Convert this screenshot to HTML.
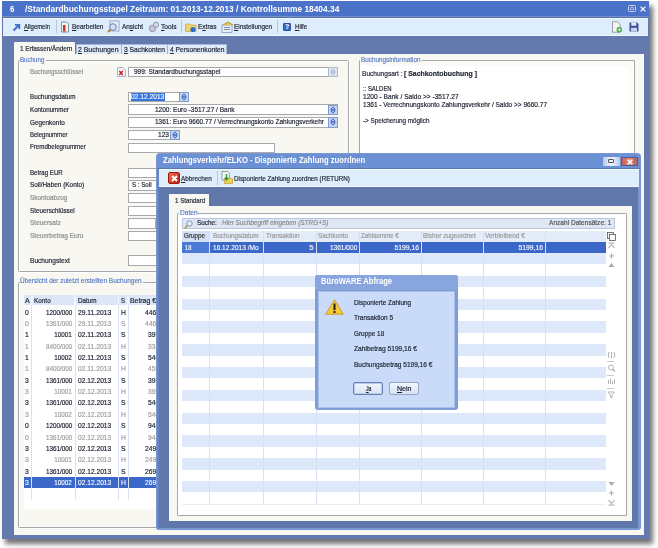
<!DOCTYPE html>
<html><head><meta charset="utf-8">
<style>
*{box-sizing:border-box;margin:0;padding:0}
html,body{width:658px;height:548px;overflow:hidden;background:#fff}
body{position:relative;font-family:"Liberation Sans",sans-serif;font-size:7px;color:#222}
.a{position:absolute}
.t{position:absolute;white-space:nowrap;-webkit-text-stroke:0.2px currentColor}
.u{text-decoration:underline}

</style></head><body>
<div class="a" style="left:5px;top:6px;width:648px;height:537.5px;background:#444;filter:blur(2.4px);opacity:.75"></div>
<div class="a" style="left:1.5px;top:1.3px;width:647.5px;height:537.5px;background:#6479ad;"></div>
<div class="a" style="left:1.5px;top:1.3px;width:647.5px;height:14.3px;background:#4a72c8;"></div>
<div class="a" style="left:1.5px;top:15.6px;width:647.5px;height:0.9px;background:#7791cb;"></div>
<div class="a" style="left:1.5px;top:16.5px;width:647.5px;height:1.0px;background:#5a70a8;"></div>
<div class="a" style="left:2.6px;top:17.5px;width:645.8px;height:18.3px;background:#deedfc;border-top:1px solid #eef8ff;border-bottom:1px solid #f2f9ff"></div>
<div class="t" style="top:3.6px;font-size:8.5px;font-weight:bold;color:#fff;line-height:10px;-webkit-text-stroke:0;left:10.4px;transform:scaleX(0.9294);transform-origin:left center;">6</div>
<div class="t" style="top:3.6px;font-size:8.5px;font-weight:bold;color:#fff;line-height:10px;-webkit-text-stroke:0;left:25.2px;transform:scaleX(0.9842);transform-origin:left center;">/Standardbuchungsstapel Zeitraum: 01.2013-12.2013 / Kontrollsumme 18404.34</div>
<div class="a" style="left:628.2px;top:5px;width:7.7px;height:7.4px;border:1.2px solid #c9d5f0;border-radius:1.5px"></div>
<div class="a" style="left:630.3px;top:7.2px;width:3.5px;height:3px;border:1px solid #b8c7ea;border-radius:1px"></div>
<svg class="a" style="left:639.8px;top:5.6px" width="6" height="6" viewBox="0 0 6 6"><path d="M0.6 0.6 L5.4 5.4 M5.4 0.6 L0.6 5.4" stroke="#fff" stroke-width="1.3"/></svg>
<svg class="a" style="left:12px;top:23px" width="9" height="9" viewBox="0 0 9 9"><path d="M1.5 7.5 L7 2 M3 1.8 H7.3 V6" stroke="#3d6fc8" stroke-width="1.8" fill="none"/></svg>
<div class="t" style="top:21.9px;font-size:7.5px;font-weight:normal;color:#1f2433;line-height:10px;left:24px;transform:scaleX(0.7890);transform-origin:left center;"><u>A</u>llgemein</div>
<div class="a" style="left:55.5px;top:19.5px;width:1.0px;height:13.5px;background:#b8c4d8;"></div>
<svg class="a" style="left:60px;top:21px" width="10" height="12" viewBox="0 0 10 12"><path d="M1.5 1 H6.5 L8.5 3 V11 H1.5 Z" fill="#f6f6f6" stroke="#777" stroke-width="0.8"/><rect x="3" y="4" width="2.5" height="6.5" fill="#c0392b"/></svg>
<div class="t" style="top:21.9px;font-size:7.5px;font-weight:normal;color:#1f2433;line-height:10px;left:72.3px;transform:scaleX(0.8678);transform-origin:left center;"><u>B</u>earbeiten</div>
<svg class="a" style="left:107px;top:20px" width="14" height="13" viewBox="0 0 14 13"><rect x="3" y="1" width="9" height="10" fill="#e8eef8" stroke="#8898b8" stroke-width="0.8"/><circle cx="6" cy="7" r="3.3" fill="#cfe0f5" stroke="#6a7fa5" stroke-width="1"/><path d="M3.5 9.5 L1 12" stroke="#b08a3a" stroke-width="1.8"/></svg>
<div class="t" style="top:21.9px;font-size:7.5px;font-weight:normal;color:#1f2433;line-height:10px;left:122px;transform:scaleX(0.8533);transform-origin:left center;">An<u>s</u>icht</div>
<svg class="a" style="left:147.5px;top:20.5px" width="12" height="12" viewBox="0 0 12 12"><circle cx="4.5" cy="7.5" r="3.2" fill="#c9c9d6" stroke="#8a8aa0" stroke-width="0.9"/><circle cx="8" cy="3.8" r="2.6" fill="#d8d8e4" stroke="#8a8aa0" stroke-width="0.9"/></svg>
<div class="t" style="top:21.9px;font-size:7.5px;font-weight:normal;color:#1f2433;line-height:10px;left:160.5px;transform:scaleX(0.8849);transform-origin:left center;"><u>T</u>ools</div>
<div class="a" style="left:180.5px;top:19.5px;width:1.0px;height:13.5px;background:#b8c4d8;"></div>
<svg class="a" style="left:185px;top:21px" width="12" height="12" viewBox="0 0 12 12"><path d="M0.5 3 H4.5 L5.5 4 H11 V10.5 H0.5 Z" fill="#f2d36b" stroke="#c9a33a" stroke-width="0.7"/><circle cx="8" cy="8.5" r="2.6" fill="#2f6fd0"/></svg>
<div class="t" style="top:21.9px;font-size:7.5px;font-weight:normal;color:#1f2433;line-height:10px;left:197.5px;transform:scaleX(0.8693);transform-origin:left center;">E<u>x</u>tras</div>
<svg class="a" style="left:221px;top:20.5px" width="13" height="12" viewBox="0 0 13 12"><rect x="1" y="4" width="10" height="7.5" fill="#e6edf8" stroke="#8a9ab8" stroke-width="0.8"/><path d="M2 4 L7 1 L12 4" fill="#f0c040" stroke="#b88a20" stroke-width="0.8"/><rect x="3" y="6" width="6" height="1" fill="#7f90b0"/><rect x="3" y="8" width="6" height="1" fill="#7f90b0"/></svg>
<div class="t" style="top:21.9px;font-size:7.5px;font-weight:normal;color:#1f2433;line-height:10px;left:234px;transform:scaleX(0.8436);transform-origin:left center;"><u>E</u>instellungen</div>
<div class="a" style="left:277px;top:19.5px;width:1px;height:13.5px;background:#b8c4d8;"></div>
<div class="a" style="left:283px;top:23px;width:8px;height:8px;background:#3d68c0;border:1px solid #27509f;border-radius:1px"></div>
<div class="t" style="top:22.0px;font-size:7px;font-weight:bold;color:#fff;line-height:10px;-webkit-text-stroke:0;left:285px;">?</div>
<div class="t" style="top:21.8px;font-size:7.5px;font-weight:normal;color:#1f2433;line-height:10px;left:294.6px;transform:scaleX(0.8125);transform-origin:left center;"><u>H</u>ilfe</div>
<svg class="a" style="left:611px;top:21px" width="12" height="12" viewBox="0 0 12 12"><path d="M1.5 0.8 H6.5 L9 3.3 V11.2 H1.5 Z" fill="#f5f5f5" stroke="#888" stroke-width="0.8"/><circle cx="8.3" cy="8.8" r="2.7" fill="#3aa63a"/><path d="M8.3 7.2 V10.4 M6.7 8.8 H9.9" stroke="#fff" stroke-width="0.9"/></svg>
<svg class="a" style="left:628.5px;top:22px" width="10" height="10" viewBox="0 0 10 10"><path d="M0.5 0.5 H8 L9.5 2 V9.5 H0.5 Z" fill="#3b4f9a"/><rect x="2.3" y="0.5" width="5" height="3.2" fill="#e8ecf5"/><rect x="2" y="5.8" width="6" height="3.7" fill="#c7cfe6"/></svg>
<div class="a" style="left:75.5px;top:43.5px;width:46.0px;height:11.0px;background:#e0eafa;border:1px solid #a5b7d6;border-bottom:none"></div>
<div class="a" style="left:121.5px;top:43.5px;width:46.0px;height:11.0px;background:#e0eafa;border:1px solid #a5b7d6;border-bottom:none;border-left:none"></div>
<div class="a" style="left:167.5px;top:43.5px;width:59.9px;height:11.0px;background:#e0eafa;border:1px solid #a5b7d6;border-bottom:none;border-left:none"></div>
<div class="a" style="left:13.8px;top:54.3px;width:630.6px;height:481.2px;background:#f8f7f2;"></div>
<div class="a" style="left:13.8px;top:42.3px;width:61.7px;height:12.7px;background:#f8f7f2;border-radius:1px 1px 0 0"></div>
<div class="t" style="top:43.8px;font-size:7.5px;font-weight:normal;color:#1f2433;line-height:10px;left:19.5px;transform:scaleX(0.8419);transform-origin:left center;">1 Erfassen/Ändern</div>
<div class="t" style="top:44.6px;font-size:7.5px;font-weight:normal;color:#1f2433;line-height:10px;left:78.2px;transform:scaleX(0.9159);transform-origin:left center;"><u>2</u> Buchungen</div>
<div class="t" style="top:44.6px;font-size:7.5px;font-weight:normal;color:#1f2433;line-height:10px;left:124.2px;transform:scaleX(0.8937);transform-origin:left center;"><u>3</u> Sachkonten</div>
<div class="t" style="top:44.6px;font-size:7.5px;font-weight:normal;color:#1f2433;line-height:10px;left:170.2px;transform:scaleX(0.8950);transform-origin:left center;"><u>4</u> Personenkonten</div>
<div class="a" style="left:18px;top:60.3px;width:331px;height:211.9px;border:1px solid #a4a7ae;border-radius:1.5px;box-shadow:1px 1px 0 #fff, inset 1px 1px 0 #fff"></div>
<div class="a" style="left:19.5px;top:56px;width:26.0px;height:8px;background:#f8f7f2;"></div>
<div class="t" style="top:55.0px;font-size:7.5px;font-weight:normal;color:#4a70c2;line-height:10px;-webkit-text-stroke:0.1px;left:20.2px;transform:scaleX(0.8207);transform-origin:left center;">Buchung</div>
<div class="t" style="top:66.6px;font-size:7.5px;font-weight:normal;color:#8c8c8c;line-height:10px;left:29.6px;transform:scaleX(0.8284);transform-origin:left center;">Buchungsschlüssel</div>
<div class="t" style="top:92.2px;font-size:7.5px;font-weight:normal;color:#1f2433;line-height:10px;left:29.6px;transform:scaleX(0.8413);transform-origin:left center;">Buchungsdatum</div>
<div class="t" style="top:105.0px;font-size:7.5px;font-weight:normal;color:#1f2433;line-height:10px;left:29.6px;transform:scaleX(0.8257);transform-origin:left center;">Kontonummer</div>
<div class="t" style="top:117.5px;font-size:7.5px;font-weight:normal;color:#1f2433;line-height:10px;left:29.6px;transform:scaleX(0.8489);transform-origin:left center;">Gegenkonto</div>
<div class="t" style="top:129.9px;font-size:7.5px;font-weight:normal;color:#1f2433;line-height:10px;left:29.6px;transform:scaleX(0.8029);transform-origin:left center;">Belegnummer</div>
<div class="t" style="top:142.4px;font-size:7.5px;font-weight:normal;color:#1f2433;line-height:10px;left:29.6px;transform:scaleX(0.8248);transform-origin:left center;">Fremdbelegnummer</div>
<div class="t" style="top:167.9px;font-size:7.5px;font-weight:normal;color:#1f2433;line-height:10px;left:29.6px;transform:scaleX(0.8194);transform-origin:left center;">Betrag EUR</div>
<div class="t" style="top:180.4px;font-size:7.5px;font-weight:normal;color:#1f2433;line-height:10px;left:29.6px;transform:scaleX(0.8552);transform-origin:left center;">Soll/Haben (Konto)</div>
<div class="t" style="top:192.9px;font-size:7.5px;font-weight:normal;color:#8c8c8c;line-height:10px;left:29.6px;transform:scaleX(0.8539);transform-origin:left center;">Skontoabzug</div>
<div class="t" style="top:205.5px;font-size:7.5px;font-weight:normal;color:#1f2433;line-height:10px;left:29.6px;transform:scaleX(0.8441);transform-origin:left center;">Steuerschlüssel</div>
<div class="t" style="top:218.0px;font-size:7.5px;font-weight:normal;color:#8c8c8c;line-height:10px;left:29.6px;transform:scaleX(0.8645);transform-origin:left center;">Steuersatz</div>
<div class="t" style="top:230.5px;font-size:7.5px;font-weight:normal;color:#8c8c8c;line-height:10px;left:29.6px;transform:scaleX(0.8728);transform-origin:left center;">Steuerbetrag Euro</div>
<div class="t" style="top:256.0px;font-size:7.5px;font-weight:normal;color:#1f2433;line-height:10px;left:29.6px;transform:scaleX(0.8756);transform-origin:left center;">Buchungstext</div>
<svg class="a" style="left:117px;top:67px" width="9" height="10" viewBox="0 0 9 10"><path d="M0.5 0.5 H6 L8.5 3 V9.5 H0.5 Z" fill="#eef0f8" stroke="#9aa3c0" stroke-width="0.8"/><path d="M2.3 4 L5.8 8 M5.8 4 L2.3 8" stroke="#d21a1a" stroke-width="1.3"/></svg>
<div class="a" style="left:128.3px;top:66.7px;width:209.9px;height:10.8px;background:#fff;border:1px solid #a7a9ad;"></div>
<div class="a" style="left:328.2px;top:66.9px;width:10.0px;height:10.4px;background:#dfe6f2;border:1px solid #b4bccb"></div>
<svg class="a" style="left:330.2px;top:68.1px" width="6" height="8" viewBox="0 0 6 8"><path d="M3 0.8 L5.2 3.3 H0.8 Z M3 7.2 L5.2 4.7 H0.8 Z" fill="none" stroke="#aab6d0" stroke-width="0.9"/></svg>
<div class="t" style="top:67.3px;font-size:7.5px;font-weight:normal;color:#1f2433;line-height:10px;left:133.8px;transform:scaleX(0.8678);transform-origin:left center;">999: Standardbuchungsstapel</div>
<div class="a" style="left:128.3px;top:92.1px;width:61.0px;height:10.4px;background:#fff;border:1px solid #a7a9ad;"></div>
<div class="a" style="left:131px;top:93.3px;width:33.8px;height:8.1px;background:#3675de;"></div>
<div class="t" style="top:92.4px;font-size:7.5px;font-weight:normal;color:#fff;line-height:10px;-webkit-text-stroke:0.12px #fff;left:131.3px;transform:scaleX(0.8869);transform-origin:left center;">02.12.2013</div>
<div class="a" style="left:179.4px;top:92.2px;width:9.9px;height:10.2px;background:#c4d6f4;border:1px solid #7f9bd0"></div>
<svg class="a" style="left:181.35000000000002px;top:93.30000000000001px" width="6" height="8" viewBox="0 0 6 8"><path d="M3 0.8 L5.2 3.3 H0.8 Z M3 7.2 L5.2 4.7 H0.8 Z" fill="none" stroke="#3a5fb5" stroke-width="0.9"/></svg>
<div class="a" style="left:128.3px;top:104.4px;width:209.9px;height:10.5px;background:#fff;border:1px solid #a7a9ad;"></div>
<div class="a" style="left:328.2px;top:104.5px;width:10.0px;height:10.3px;background:#c4d6f4;border:1px solid #7f9bd0"></div>
<svg class="a" style="left:330.2px;top:105.65px" width="6" height="8" viewBox="0 0 6 8"><path d="M3 0.8 L5.2 3.3 H0.8 Z M3 7.2 L5.2 4.7 H0.8 Z" fill="none" stroke="#3a5fb5" stroke-width="0.9"/></svg>
<div class="t" style="top:104.8px;font-size:7.5px;font-weight:normal;color:#1f2433;line-height:10px;left:154.6px;transform:scaleX(0.8666);transform-origin:left center;">1200: Euro -3517.27 / Bank</div>
<div class="a" style="left:128.3px;top:117.2px;width:209.9px;height:10.5px;background:#fff;border:1px solid #a7a9ad;"></div>
<div class="a" style="left:328.2px;top:117.3px;width:10.0px;height:10.3px;background:#c4d6f4;border:1px solid #7f9bd0"></div>
<svg class="a" style="left:330.2px;top:118.44999999999999px" width="6" height="8" viewBox="0 0 6 8"><path d="M3 0.8 L5.2 3.3 H0.8 Z M3 7.2 L5.2 4.7 H0.8 Z" fill="none" stroke="#3a5fb5" stroke-width="0.9"/></svg>
<div class="t" style="top:117.3px;font-size:7.5px;font-weight:normal;color:#1f2433;line-height:10px;left:154.6px;transform:scaleX(0.8679);transform-origin:left center;">1361: Euro 9660.77 / Verrechnungskonto Zahlungsverkehr</div>
<div class="a" style="left:128.3px;top:129.9px;width:51.4px;height:10.6px;background:#fff;border:1px solid #a7a9ad;"></div>
<div class="a" style="left:169.7px;top:130px;width:10.0px;height:10.4px;background:#c4d6f4;border:1px solid #7f9bd0"></div>
<svg class="a" style="left:171.7px;top:131.2px" width="6" height="8" viewBox="0 0 6 8"><path d="M3 0.8 L5.2 3.3 H0.8 Z M3 7.2 L5.2 4.7 H0.8 Z" fill="none" stroke="#3a5fb5" stroke-width="0.9"/></svg>
<div class="t" style="top:130.3px;font-size:7.5px;font-weight:normal;color:#1f2433;line-height:10px;left:157.8px;transform:scaleX(0.8789);transform-origin:left center;">123</div>
<div class="a" style="left:128.3px;top:142.8px;width:146.7px;height:10.4px;background:#fff;border:1px solid #a7a9ad;"></div>
<div class="a" style="left:128.3px;top:167.7px;width:201.7px;height:10.3px;background:#fff;border:1px solid #a7a9ad;"></div>
<div class="a" style="left:128.3px;top:180px;width:201.7px;height:10.6px;background:#fff;border:1px solid #a7a9ad;"></div>
<div class="a" style="left:128.3px;top:192.8px;width:201.7px;height:10.4px;background:#fff;border:1px solid #a7a9ad;"></div>
<div class="a" style="left:128.3px;top:205.5px;width:201.7px;height:10.4px;background:#fff;border:1px solid #a7a9ad;"></div>
<div class="a" style="left:128.3px;top:218px;width:28.0px;height:10.5px;background:#fff;border:1px solid #a7a9ad;"></div>
<div class="a" style="left:128.3px;top:230.5px;width:201.7px;height:10.5px;background:#fff;border:1px solid #a7a9ad;"></div>
<div class="a" style="left:128.3px;top:255.2px;width:201.7px;height:10.4px;background:#fff;border:1px solid #a7a9ad;"></div>
<div class="t" style="top:180.4px;font-size:7.5px;font-weight:normal;color:#1f2433;line-height:10px;left:131.5px;transform:scaleX(0.8205);transform-origin:left center;">S : Soll</div>
<div class="a" style="left:358.5px;top:60.3px;width:276.5px;height:211.9px;border:1px solid #a4a7ae;border-radius:1px"></div>
<div class="a" style="left:359.5px;top:61.3px;width:274.5px;height:209.7px;background:#fff;"></div>
<div class="a" style="left:359.5px;top:61.3px;width:274.5px;height:5.2px;background:#faf9f5;"></div>
<div class="a" style="left:627.5px;top:61.3px;width:6.5px;height:209.7px;background:#fcfbf8;"></div>
<div class="a" style="left:360px;top:56px;width:61.5px;height:7.5px;background:#f8f7f2;"></div>
<div class="t" style="top:54.6px;font-size:7.5px;font-weight:normal;color:#4a70c2;line-height:10px;-webkit-text-stroke:0.1px;left:361px;transform:scaleX(0.8443);transform-origin:left center;">Buchungsinformation</div>
<div class="t" style="top:68.9px;font-size:7.5px;font-weight:normal;color:#1f2433;line-height:10px;left:362.3px;transform:scaleX(0.8751);transform-origin:left center;">Buchungsart : </div>
<div class="t" style="top:68.9px;font-size:7.5px;font-weight:bold;color:#1f2433;line-height:10px;left:404.3px;transform:scaleX(0.9220);transform-origin:left center;">[ Sachkontobuchung ]</div>
<div class="t" style="top:84.4px;font-size:7.5px;font-weight:normal;color:#1f2433;line-height:10px;left:362.5px;transform:scaleX(0.7886);transform-origin:left center;">:: SALDEN</div>
<div class="t" style="top:91.9px;font-size:7.5px;font-weight:normal;color:#1f2433;line-height:10px;left:362.5px;transform:scaleX(0.8817);transform-origin:left center;">1200 - Bank / Saldo &gt;&gt; -3517.27</div>
<div class="t" style="top:99.8px;font-size:7.5px;font-weight:normal;color:#1f2433;line-height:10px;left:362.5px;transform:scaleX(0.8708);transform-origin:left center;">1361 - Verrechnungskonto Zahlungsverkehr / Saldo &gt;&gt; 9660.77</div>
<div class="t" style="top:115.8px;font-size:7.5px;font-weight:normal;color:#1f2433;line-height:10px;left:362.5px;transform:scaleX(0.8403);transform-origin:left center;">-&gt; Speicherung möglich</div>
<div class="a" style="left:17.6px;top:281.5px;width:312.4px;height:246.5px;border:1px solid #a4a7ae;border-radius:1.5px;box-shadow:1px 1px 0 #fff, inset 1px 1px 0 #fff"></div>
<div class="a" style="left:19.5px;top:277px;width:123.5px;height:9px;background:#f8f7f2;"></div>
<div class="t" style="top:276.3px;font-size:7.5px;font-weight:normal;color:#4a70c2;line-height:10px;-webkit-text-stroke:0.1px;left:20px;transform:scaleX(0.8629);transform-origin:left center;">Übersicht der zuletzt erstellten Buchungen</div>
<div class="a" style="left:23.6px;top:295.5px;width:306.4px;height:213.5px;background:#fff;"></div>
<div class="a" style="left:23.6px;top:295.3px;width:306.4px;height:9.9px;background:#dbe7f9;"></div>
<div class="a" style="left:23.6px;top:477.3px;width:306.4px;height:10.6px;background:#3a67c8;"></div>
<div class="a" style="left:31.4px;top:305.2px;width:0.8px;height:194.8px;background:#d6e1f3;"></div>
<div class="a" style="left:31.099999999999998px;top:295.3px;width:1.5px;height:9.9px;background:#f2f7ff;"></div>
<div class="a" style="left:74.5px;top:305.2px;width:0.8px;height:194.8px;background:#d6e1f3;"></div>
<div class="a" style="left:74.2px;top:295.3px;width:1.5px;height:9.9px;background:#f2f7ff;"></div>
<div class="a" style="left:118.2px;top:305.2px;width:0.8px;height:194.8px;background:#d6e1f3;"></div>
<div class="a" style="left:117.9px;top:295.3px;width:1.5px;height:9.9px;background:#f2f7ff;"></div>
<div class="a" style="left:127.5px;top:305.2px;width:0.8px;height:194.8px;background:#d6e1f3;"></div>
<div class="a" style="left:127.2px;top:295.3px;width:1.5px;height:9.9px;background:#f2f7ff;"></div>
<div class="t" style="top:295.7px;font-size:7.5px;font-weight:normal;color:#1f2433;line-height:10px;left:24.9px;transform:scaleX(0.9171);transform-origin:left center;">A</div>
<div class="t" style="top:295.7px;font-size:7.5px;font-weight:normal;color:#1f2433;line-height:10px;left:34.3px;transform:scaleX(0.8516);transform-origin:left center;">Konto</div>
<div class="t" style="top:295.7px;font-size:7.5px;font-weight:normal;color:#1f2433;line-height:10px;left:77.8px;transform:scaleX(0.8419);transform-origin:left center;">Datum</div>
<div class="t" style="top:295.7px;font-size:7.5px;font-weight:normal;color:#1f2433;line-height:10px;left:120.5px;transform:scaleX(0.7975);transform-origin:left center;">S</div>
<div class="t" style="top:295.7px;font-size:7.5px;font-weight:normal;color:#1f2433;line-height:10px;left:130px;transform:scaleX(0.9168);transform-origin:left center;">Betrag €</div>
<div class="t" style="top:307.5px;font-size:7.5px;font-weight:normal;color:#1e2230;line-height:10px;left:25px;transform:scaleX(0.9);transform-origin:left center;">0</div>
<div class="t" style="top:307.5px;font-size:7.5px;font-weight:normal;color:#1e2230;line-height:10px;right:586.0px;transform:scaleX(0.84);transform-origin:right center;">1200/000</div>
<div class="t" style="top:307.5px;font-size:7.5px;font-weight:normal;color:#1e2230;line-height:10px;left:78.1px;transform:scaleX(0.8977);transform-origin:left center;">29.11.2013</div>
<div class="t" style="top:307.5px;font-size:7.5px;font-weight:normal;color:#1e2230;line-height:10px;left:121px;transform:scaleX(0.9);transform-origin:left center;">H</div>
<div class="t" style="top:307.5px;font-size:7.5px;font-weight:normal;color:#1e2230;line-height:10px;left:144.8px;transform:scaleX(0.89);transform-origin:left center;">4461,38</div>
<div class="t" style="top:318.87px;font-size:7.5px;font-weight:normal;color:#a0a0a0;line-height:10px;left:25px;transform:scaleX(0.9);transform-origin:left center;">0</div>
<div class="t" style="top:318.87px;font-size:7.5px;font-weight:normal;color:#a0a0a0;line-height:10px;right:586.0px;transform:scaleX(0.84);transform-origin:right center;">1361/000</div>
<div class="t" style="top:318.87px;font-size:7.5px;font-weight:normal;color:#a0a0a0;line-height:10px;left:78.1px;transform:scaleX(0.8977);transform-origin:left center;">29.11.2013</div>
<div class="t" style="top:318.87px;font-size:7.5px;font-weight:normal;color:#a0a0a0;line-height:10px;left:121px;transform:scaleX(0.9);transform-origin:left center;">S</div>
<div class="t" style="top:318.87px;font-size:7.5px;font-weight:normal;color:#a0a0a0;line-height:10px;left:144.8px;transform:scaleX(0.89);transform-origin:left center;">4461,38</div>
<div class="t" style="top:330.24px;font-size:7.5px;font-weight:normal;color:#1e2230;line-height:10px;left:25px;transform:scaleX(0.9);transform-origin:left center;">1</div>
<div class="t" style="top:330.24px;font-size:7.5px;font-weight:normal;color:#1e2230;line-height:10px;right:586.0px;transform:scaleX(0.84);transform-origin:right center;">10001</div>
<div class="t" style="top:330.24px;font-size:7.5px;font-weight:normal;color:#1e2230;line-height:10px;left:78.1px;transform:scaleX(0.8977);transform-origin:left center;">02.11.2013</div>
<div class="t" style="top:330.24px;font-size:7.5px;font-weight:normal;color:#1e2230;line-height:10px;left:121px;transform:scaleX(0.9);transform-origin:left center;">S</div>
<div class="t" style="top:330.24px;font-size:7.5px;font-weight:normal;color:#1e2230;line-height:10px;left:147.6px;transform:scaleX(0.89);transform-origin:left center;">3970,00</div>
<div class="t" style="top:341.61px;font-size:7.5px;font-weight:normal;color:#a0a0a0;line-height:10px;left:25px;transform:scaleX(0.9);transform-origin:left center;">1</div>
<div class="t" style="top:341.61px;font-size:7.5px;font-weight:normal;color:#a0a0a0;line-height:10px;right:586.0px;transform:scaleX(0.84);transform-origin:right center;">8400/000</div>
<div class="t" style="top:341.61px;font-size:7.5px;font-weight:normal;color:#a0a0a0;line-height:10px;left:78.1px;transform:scaleX(0.8977);transform-origin:left center;">02.11.2013</div>
<div class="t" style="top:341.61px;font-size:7.5px;font-weight:normal;color:#a0a0a0;line-height:10px;left:121px;transform:scaleX(0.9);transform-origin:left center;">H</div>
<div class="t" style="top:341.61px;font-size:7.5px;font-weight:normal;color:#a0a0a0;line-height:10px;left:147.6px;transform:scaleX(0.89);transform-origin:left center;">3341,18</div>
<div class="t" style="top:352.98px;font-size:7.5px;font-weight:normal;color:#1e2230;line-height:10px;left:25px;transform:scaleX(0.9);transform-origin:left center;">1</div>
<div class="t" style="top:352.98px;font-size:7.5px;font-weight:normal;color:#1e2230;line-height:10px;right:586.0px;transform:scaleX(0.84);transform-origin:right center;">10002</div>
<div class="t" style="top:352.98px;font-size:7.5px;font-weight:normal;color:#1e2230;line-height:10px;left:78.1px;transform:scaleX(0.8977);transform-origin:left center;">02.11.2013</div>
<div class="t" style="top:352.98px;font-size:7.5px;font-weight:normal;color:#1e2230;line-height:10px;left:121px;transform:scaleX(0.9);transform-origin:left center;">S</div>
<div class="t" style="top:352.98px;font-size:7.5px;font-weight:normal;color:#1e2230;line-height:10px;left:147.6px;transform:scaleX(0.89);transform-origin:left center;">5466,00</div>
<div class="t" style="top:364.35px;font-size:7.5px;font-weight:normal;color:#a0a0a0;line-height:10px;left:25px;transform:scaleX(0.9);transform-origin:left center;">1</div>
<div class="t" style="top:364.35px;font-size:7.5px;font-weight:normal;color:#a0a0a0;line-height:10px;right:586.0px;transform:scaleX(0.84);transform-origin:right center;">8400/000</div>
<div class="t" style="top:364.35px;font-size:7.5px;font-weight:normal;color:#a0a0a0;line-height:10px;left:78.1px;transform:scaleX(0.8977);transform-origin:left center;">02.11.2013</div>
<div class="t" style="top:364.35px;font-size:7.5px;font-weight:normal;color:#a0a0a0;line-height:10px;left:121px;transform:scaleX(0.9);transform-origin:left center;">H</div>
<div class="t" style="top:364.35px;font-size:7.5px;font-weight:normal;color:#a0a0a0;line-height:10px;left:147.6px;transform:scaleX(0.89);transform-origin:left center;">4593,28</div>
<div class="t" style="top:375.72px;font-size:7.5px;font-weight:normal;color:#1e2230;line-height:10px;left:25px;transform:scaleX(0.9);transform-origin:left center;">3</div>
<div class="t" style="top:375.72px;font-size:7.5px;font-weight:normal;color:#1e2230;line-height:10px;right:586.0px;transform:scaleX(0.84);transform-origin:right center;">1361/000</div>
<div class="t" style="top:375.72px;font-size:7.5px;font-weight:normal;color:#1e2230;line-height:10px;left:78.1px;transform:scaleX(0.8842);transform-origin:left center;">02.12.2013</div>
<div class="t" style="top:375.72px;font-size:7.5px;font-weight:normal;color:#1e2230;line-height:10px;left:121px;transform:scaleX(0.9);transform-origin:left center;">S</div>
<div class="t" style="top:375.72px;font-size:7.5px;font-weight:normal;color:#1e2230;line-height:10px;left:147.6px;transform:scaleX(0.89);transform-origin:left center;">3970,00</div>
<div class="t" style="top:387.09px;font-size:7.5px;font-weight:normal;color:#a0a0a0;line-height:10px;left:25px;transform:scaleX(0.9);transform-origin:left center;">3</div>
<div class="t" style="top:387.09px;font-size:7.5px;font-weight:normal;color:#a0a0a0;line-height:10px;right:586.0px;transform:scaleX(0.84);transform-origin:right center;">10001</div>
<div class="t" style="top:387.09px;font-size:7.5px;font-weight:normal;color:#a0a0a0;line-height:10px;left:78.1px;transform:scaleX(0.8842);transform-origin:left center;">02.12.2013</div>
<div class="t" style="top:387.09px;font-size:7.5px;font-weight:normal;color:#a0a0a0;line-height:10px;left:121px;transform:scaleX(0.9);transform-origin:left center;">H</div>
<div class="t" style="top:387.09px;font-size:7.5px;font-weight:normal;color:#a0a0a0;line-height:10px;left:147.6px;transform:scaleX(0.89);transform-origin:left center;">3970,00</div>
<div class="t" style="top:398.46px;font-size:7.5px;font-weight:normal;color:#1e2230;line-height:10px;left:25px;transform:scaleX(0.9);transform-origin:left center;">3</div>
<div class="t" style="top:398.46px;font-size:7.5px;font-weight:normal;color:#1e2230;line-height:10px;right:586.0px;transform:scaleX(0.84);transform-origin:right center;">1361/000</div>
<div class="t" style="top:398.46px;font-size:7.5px;font-weight:normal;color:#1e2230;line-height:10px;left:78.1px;transform:scaleX(0.8842);transform-origin:left center;">02.12.2013</div>
<div class="t" style="top:398.46px;font-size:7.5px;font-weight:normal;color:#1e2230;line-height:10px;left:121px;transform:scaleX(0.9);transform-origin:left center;">S</div>
<div class="t" style="top:398.46px;font-size:7.5px;font-weight:normal;color:#1e2230;line-height:10px;left:147.6px;transform:scaleX(0.89);transform-origin:left center;">5466,00</div>
<div class="t" style="top:409.83px;font-size:7.5px;font-weight:normal;color:#a0a0a0;line-height:10px;left:25px;transform:scaleX(0.9);transform-origin:left center;">3</div>
<div class="t" style="top:409.83px;font-size:7.5px;font-weight:normal;color:#a0a0a0;line-height:10px;right:586.0px;transform:scaleX(0.84);transform-origin:right center;">10002</div>
<div class="t" style="top:409.83px;font-size:7.5px;font-weight:normal;color:#a0a0a0;line-height:10px;left:78.1px;transform:scaleX(0.8842);transform-origin:left center;">02.12.2013</div>
<div class="t" style="top:409.83px;font-size:7.5px;font-weight:normal;color:#a0a0a0;line-height:10px;left:121px;transform:scaleX(0.9);transform-origin:left center;">H</div>
<div class="t" style="top:409.83px;font-size:7.5px;font-weight:normal;color:#a0a0a0;line-height:10px;left:147.6px;transform:scaleX(0.89);transform-origin:left center;">5466,00</div>
<div class="t" style="top:421.2px;font-size:7.5px;font-weight:normal;color:#1e2230;line-height:10px;left:25px;transform:scaleX(0.9);transform-origin:left center;">0</div>
<div class="t" style="top:421.2px;font-size:7.5px;font-weight:normal;color:#1e2230;line-height:10px;right:586.0px;transform:scaleX(0.84);transform-origin:right center;">1200/000</div>
<div class="t" style="top:421.2px;font-size:7.5px;font-weight:normal;color:#1e2230;line-height:10px;left:78.1px;transform:scaleX(0.8842);transform-origin:left center;">02.12.2013</div>
<div class="t" style="top:421.2px;font-size:7.5px;font-weight:normal;color:#1e2230;line-height:10px;left:121px;transform:scaleX(0.9);transform-origin:left center;">S</div>
<div class="t" style="top:421.2px;font-size:7.5px;font-weight:normal;color:#1e2230;line-height:10px;left:147.6px;transform:scaleX(0.89);transform-origin:left center;">9446,40</div>
<div class="t" style="top:432.57px;font-size:7.5px;font-weight:normal;color:#a0a0a0;line-height:10px;left:25px;transform:scaleX(0.9);transform-origin:left center;">0</div>
<div class="t" style="top:432.57px;font-size:7.5px;font-weight:normal;color:#a0a0a0;line-height:10px;right:586.0px;transform:scaleX(0.84);transform-origin:right center;">1361/000</div>
<div class="t" style="top:432.57px;font-size:7.5px;font-weight:normal;color:#a0a0a0;line-height:10px;left:78.1px;transform:scaleX(0.8842);transform-origin:left center;">02.12.2013</div>
<div class="t" style="top:432.57px;font-size:7.5px;font-weight:normal;color:#a0a0a0;line-height:10px;left:121px;transform:scaleX(0.9);transform-origin:left center;">H</div>
<div class="t" style="top:432.57px;font-size:7.5px;font-weight:normal;color:#a0a0a0;line-height:10px;left:147.6px;transform:scaleX(0.89);transform-origin:left center;">9446,40</div>
<div class="t" style="top:443.94px;font-size:7.5px;font-weight:normal;color:#1e2230;line-height:10px;left:25px;transform:scaleX(0.9);transform-origin:left center;">3</div>
<div class="t" style="top:443.94px;font-size:7.5px;font-weight:normal;color:#1e2230;line-height:10px;right:586.0px;transform:scaleX(0.84);transform-origin:right center;">1361/000</div>
<div class="t" style="top:443.94px;font-size:7.5px;font-weight:normal;color:#1e2230;line-height:10px;left:78.1px;transform:scaleX(0.8842);transform-origin:left center;">02.12.2013</div>
<div class="t" style="top:443.94px;font-size:7.5px;font-weight:normal;color:#1e2230;line-height:10px;left:121px;transform:scaleX(0.9);transform-origin:left center;">S</div>
<div class="t" style="top:443.94px;font-size:7.5px;font-weight:normal;color:#1e2230;line-height:10px;left:145.0px;transform:scaleX(0.89);transform-origin:left center;">24991,00</div>
<div class="t" style="top:455.31px;font-size:7.5px;font-weight:normal;color:#a0a0a0;line-height:10px;left:25px;transform:scaleX(0.9);transform-origin:left center;">3</div>
<div class="t" style="top:455.31px;font-size:7.5px;font-weight:normal;color:#a0a0a0;line-height:10px;right:586.0px;transform:scaleX(0.84);transform-origin:right center;">10001</div>
<div class="t" style="top:455.31px;font-size:7.5px;font-weight:normal;color:#a0a0a0;line-height:10px;left:78.1px;transform:scaleX(0.8842);transform-origin:left center;">02.12.2013</div>
<div class="t" style="top:455.31px;font-size:7.5px;font-weight:normal;color:#a0a0a0;line-height:10px;left:121px;transform:scaleX(0.9);transform-origin:left center;">H</div>
<div class="t" style="top:455.31px;font-size:7.5px;font-weight:normal;color:#a0a0a0;line-height:10px;left:145.0px;transform:scaleX(0.89);transform-origin:left center;">24991,00</div>
<div class="t" style="top:466.68px;font-size:7.5px;font-weight:normal;color:#1e2230;line-height:10px;left:25px;transform:scaleX(0.9);transform-origin:left center;">3</div>
<div class="t" style="top:466.68px;font-size:7.5px;font-weight:normal;color:#1e2230;line-height:10px;right:586.0px;transform:scaleX(0.84);transform-origin:right center;">1361/000</div>
<div class="t" style="top:466.68px;font-size:7.5px;font-weight:normal;color:#1e2230;line-height:10px;left:78.1px;transform:scaleX(0.8842);transform-origin:left center;">02.12.2013</div>
<div class="t" style="top:466.68px;font-size:7.5px;font-weight:normal;color:#1e2230;line-height:10px;left:121px;transform:scaleX(0.9);transform-origin:left center;">S</div>
<div class="t" style="top:466.68px;font-size:7.5px;font-weight:normal;color:#1e2230;line-height:10px;left:145.0px;transform:scaleX(0.89);transform-origin:left center;">26991,00</div>
<div class="t" style="top:478.05px;font-size:7.5px;font-weight:normal;color:#fff;line-height:10px;-webkit-text-stroke:0.12px #fff;left:25px;transform:scaleX(0.9);transform-origin:left center;">3</div>
<div class="t" style="top:478.05px;font-size:7.5px;font-weight:normal;color:#fff;line-height:10px;-webkit-text-stroke:0.12px #fff;right:586.0px;transform:scaleX(0.84);transform-origin:right center;">10002</div>
<div class="t" style="top:478.05px;font-size:7.5px;font-weight:normal;color:#fff;line-height:10px;-webkit-text-stroke:0.12px #fff;left:78.1px;transform:scaleX(0.8842);transform-origin:left center;">02.12.2013</div>
<div class="t" style="top:478.05px;font-size:7.5px;font-weight:normal;color:#fff;line-height:10px;-webkit-text-stroke:0.12px #fff;left:121px;transform:scaleX(0.9);transform-origin:left center;">H</div>
<div class="t" style="top:478.05px;font-size:7.5px;font-weight:normal;color:#fff;line-height:10px;-webkit-text-stroke:0.12px #fff;left:145.0px;transform:scaleX(0.89);transform-origin:left center;">26991,00</div>
<div class="a" style="left:156.4px;top:153px;width:484.4px;height:377px;background:#7b97d2;border-radius:4px 4px 3px 3px"></div>
<div class="a" style="left:157.4px;top:154px;width:480.9px;height:373.5px;background:#6077aa;border-radius:3px 3px 0 0"></div>
<div class="a" style="left:157.4px;top:154px;width:482.4px;height:14.5px;background:#6c90d4;border-radius:3px 3px 0 0;border-bottom:1px solid #5b78b0"></div>
<div class="a" style="left:157.4px;top:168.5px;width:2.0px;height:360.5px;background:#6a86c2;"></div>
<div class="t" style="top:155.6px;font-size:8.2px;font-weight:bold;color:#fff;line-height:10px;-webkit-text-stroke:0;left:162.6px;transform:scaleX(0.9337);transform-origin:left center;">Zahlungsverkehr/ELKO - Disponierte Zahlung zuordnen</div>
<div class="a" style="left:603px;top:157px;width:17px;height:8.7px;background:linear-gradient(90deg,#b4c8e6,#e6eefa 40%,#e6eefa 60%,#b4c8e6)"></div>
<div class="a" style="left:608px;top:158.5px;width:6px;height:4.5px;border:1px solid #555;border-radius:1px"></div>
<div class="a" style="left:621px;top:157px;width:16.5px;height:8.7px;background:linear-gradient(90deg,#c8604e,#e08a78 50%,#c8604e);border:1px solid #4a5f98"></div>
<svg class="a" style="left:626.6px;top:158.6px" width="6" height="6" viewBox="0 0 6 6"><path d="M0.7 0.7 L5.3 5.3 M5.3 0.7 L0.7 5.3" stroke="#fff" stroke-width="1.5"/></svg>
<div class="a" style="left:348.5px;top:154px;width:0.8px;height:14.5px;background:rgba(90,110,150,.35);"></div>
<div class="a" style="left:358.3px;top:154px;width:0.8px;height:14.5px;background:rgba(90,110,150,.35);"></div>
<div class="a" style="left:634.3px;top:154px;width:0.8px;height:14.5px;background:rgba(90,110,150,.35);"></div>
<div class="a" style="left:159.4px;top:168.8px;width:479.2px;height:18.2px;background:#deedfc;border-top:1px solid #eef8ff;border-bottom:1px solid #f2f9ff"></div>
<div class="a" style="left:168px;top:172px;width:11.5px;height:11.5px;border-radius:2px;background:linear-gradient(135deg,#f06a50,#c0200f);border:1px solid #a01808"></div>
<svg class="a" style="left:169.5px;top:173.5px" width="9" height="9" viewBox="0 0 9 9"><path d="M2 2 L7 7 M7 2 L2 7" stroke="#fff" stroke-width="2"/></svg>
<div class="t" style="top:173.8px;font-size:7.5px;font-weight:normal;color:#1f2433;line-height:10px;left:181.2px;transform:scaleX(0.8486);transform-origin:left center;"><u>A</u>bbrechen</div>
<div class="a" style="left:217px;top:171px;width:1px;height:13.5px;background:#b8c4d8;"></div>
<svg class="a" style="left:221px;top:171px" width="12" height="13" viewBox="0 0 12 13"><path d="M1 0.5 H6.5 L8.5 2.5 V9 H1 Z" fill="#f4f4f4" stroke="#8a8a8a" stroke-width="0.8"/><path d="M3.5 7.5 H11.5 V12.5 H3.5 Z" fill="#f2cf5a" stroke="#c79d2a" stroke-width="0.7"/><path d="M5.5 3 V8.5 M3.8 6.8 L5.5 8.8 L7.2 6.8" stroke="#2f9a2f" stroke-width="1.4" fill="none"/></svg>
<div class="t" style="top:173.8px;font-size:7.5px;font-weight:normal;color:#1f2433;line-height:10px;left:234.4px;transform:scaleX(0.8342);transform-origin:left center;">Disponierte Zahlung zuordnen (RETURN)</div>
<div class="a" style="left:168.8px;top:206px;width:463.5px;height:315.3px;background:#f8f7f2;"></div>
<div class="a" style="left:169.3px;top:194.4px;width:39.7px;height:12.1px;background:#f8f7f2;"></div>
<div class="t" style="top:195.6px;font-size:7.5px;font-weight:normal;color:#1f2433;line-height:10px;left:174.8px;transform:scaleX(0.8228);transform-origin:left center;">1 Standard</div>
<div class="a" style="left:177.4px;top:212.8px;width:449.4px;height:303.2px;background:#fff;border:1px solid #a4a7ae;border-radius:1px"></div>
<div class="a" style="left:178.8px;top:208px;width:19.7px;height:9px;background:linear-gradient(#f4f3ee 0,#f4f3ee 5px,#fff 5px)"></div>
<div class="t" style="top:207.7px;font-size:7.5px;font-weight:normal;color:#4a70c2;line-height:10px;-webkit-text-stroke:0.1px;left:179.7px;transform:scaleX(0.8843);transform-origin:left center;">Daten</div>
<div class="a" style="left:182.3px;top:218.2px;width:432.4px;height:10.5px;background:#dfe7f5;border:1px solid #b7c5de"></div>
<svg class="a" style="left:184px;top:219.5px" width="9" height="9" viewBox="0 0 9 9"><circle cx="5.5" cy="3.5" r="2.7" fill="#e6eef8" stroke="#6f8ab8" stroke-width="0.9"/><path d="M3.5 5.5 L0.8 8.2" stroke="#c08a30" stroke-width="1.6"/></svg>
<div class="t" style="top:218.3px;font-size:7.5px;font-weight:normal;color:#1f2433;line-height:10px;left:196.8px;transform:scaleX(0.8433);transform-origin:left center;">Suche:</div>
<div class="t" style="top:218.3px;font-size:7.5px;font-weight:normal;color:#8a8a8a;line-height:10px;font-style:italic;left:221.6px;transform:scaleX(0.8578);transform-origin:left center;">Hier Suchbegriff eingeben (STRG+S)</div>
<div class="t" style="top:218.4px;font-size:7.5px;font-weight:normal;color:#555;line-height:10px;right:46.5px;transform:scaleX(0.8724);transform-origin:right center;">Anzahl Datensätze: 1</div>
<div class="a" style="left:182.3px;top:231px;width:423.7px;height:11.1px;background:#e4ecf9;"></div>
<div class="a" style="left:182.3px;top:231px;width:27.1px;height:11.1px;background:#d3e1f7;"></div>
<div class="a" style="left:182.3px;top:253.0px;width:423.7px;height:11.4px;background:#dde8fa;"></div>
<div class="a" style="left:182.3px;top:275.8px;width:423.7px;height:11.4px;background:#dde8fa;"></div>
<div class="a" style="left:182.3px;top:298.6px;width:423.7px;height:11.4px;background:#dde8fa;"></div>
<div class="a" style="left:182.3px;top:321.4px;width:423.7px;height:11.4px;background:#dde8fa;"></div>
<div class="a" style="left:182.3px;top:344.2px;width:423.7px;height:11.4px;background:#dde8fa;"></div>
<div class="a" style="left:182.3px;top:367.0px;width:423.7px;height:11.4px;background:#dde8fa;"></div>
<div class="a" style="left:182.3px;top:389.8px;width:423.7px;height:11.4px;background:#dde8fa;"></div>
<div class="a" style="left:182.3px;top:412.6px;width:423.7px;height:11.4px;background:#dde8fa;"></div>
<div class="a" style="left:182.3px;top:435.4px;width:423.7px;height:11.4px;background:#dde8fa;"></div>
<div class="a" style="left:182.3px;top:458.20000000000005px;width:423.7px;height:11.4px;background:#dde8fa;"></div>
<div class="a" style="left:182.3px;top:481.0px;width:423.7px;height:11.4px;background:#dde8fa;"></div>
<div class="a" style="left:182.3px;top:242.1px;width:423.7px;height:10.9px;background:#3a67c8;"></div>
<div class="a" style="left:182.3px;top:242.1px;width:27.1px;height:10.9px;background:#4a7ad6;"></div>
<div class="a" style="left:209.0px;top:231px;width:0.8px;height:273px;background:#d6e1f3;"></div>
<div class="a" style="left:262.6px;top:231px;width:0.8px;height:273px;background:#d6e1f3;"></div>
<div class="a" style="left:315.6px;top:231px;width:0.8px;height:273px;background:#d6e1f3;"></div>
<div class="a" style="left:358.6px;top:231px;width:0.8px;height:273px;background:#d6e1f3;"></div>
<div class="a" style="left:420.6px;top:231px;width:0.8px;height:273px;background:#d6e1f3;"></div>
<div class="a" style="left:482.6px;top:231px;width:0.8px;height:273px;background:#d6e1f3;"></div>
<div class="a" style="left:544.6px;top:231px;width:0.8px;height:273px;background:#d6e1f3;"></div>
<div class="a" style="left:182.3px;top:503.8px;width:423.7px;height:0.8px;background:#e7edf7;"></div>
<div class="t" style="top:230.8px;font-size:7.5px;font-weight:normal;color:#333;line-height:10px;left:183.6px;transform:scaleX(0.8390);transform-origin:left center;">Gruppe</div>
<div class="t" style="top:230.8px;font-size:7.5px;font-weight:normal;color:#999;line-height:10px;left:212.5px;transform:scaleX(0.8413);transform-origin:left center;">Buchungsdatum</div>
<div class="t" style="top:230.8px;font-size:7.5px;font-weight:normal;color:#999;line-height:10px;left:265.5px;transform:scaleX(0.8636);transform-origin:left center;">Transaktion</div>
<div class="t" style="top:230.8px;font-size:7.5px;font-weight:normal;color:#999;line-height:10px;left:318px;transform:scaleX(0.8462);transform-origin:left center;">Sachkonto</div>
<div class="t" style="top:230.8px;font-size:7.5px;font-weight:normal;color:#999;line-height:10px;left:361.2px;transform:scaleX(0.8319);transform-origin:left center;">Zahlsumme €</div>
<div class="t" style="top:230.8px;font-size:7.5px;font-weight:normal;color:#999;line-height:10px;left:423.2px;transform:scaleX(0.8657);transform-origin:left center;">Bisher zugeordnet</div>
<div class="t" style="top:230.8px;font-size:7.5px;font-weight:normal;color:#999;line-height:10px;left:485.4px;transform:scaleX(0.8698);transform-origin:left center;">Verbleibend €</div>
<div class="t" style="top:242.5px;font-size:7.5px;font-weight:normal;color:#fff;line-height:10px;-webkit-text-stroke:0.12px #fff;left:184.6px;transform:scaleX(0.7670);transform-origin:left center;">18</div>
<div class="t" style="top:242.5px;font-size:7.5px;font-weight:normal;color:#fff;line-height:10px;-webkit-text-stroke:0.12px #fff;left:213.2px;transform:scaleX(0.8748);transform-origin:left center;">16.12.2013 /Mo</div>
<div class="t" style="top:242.5px;font-size:7.5px;font-weight:normal;color:#fff;line-height:10px;-webkit-text-stroke:0.12px #fff;right:344.5px;">5</div>
<div class="t" style="top:242.5px;font-size:7.5px;font-weight:normal;color:#fff;line-height:10px;-webkit-text-stroke:0.12px #fff;right:300.9px;transform:scaleX(0.8755);transform-origin:right center;">1361/000</div>
<div class="t" style="top:242.5px;font-size:7.5px;font-weight:normal;color:#fff;line-height:10px;-webkit-text-stroke:0.12px #fff;right:238.8px;transform:scaleX(0.9069);transform-origin:right center;">5199,16</div>
<div class="t" style="top:242.5px;font-size:7.5px;font-weight:normal;color:#fff;line-height:10px;-webkit-text-stroke:0.12px #fff;right:115px;transform:scaleX(0.9069);transform-origin:right center;">5199,16</div>
<svg class="a" style="left:607px;top:232px" width="9" height="9" viewBox="0 0 9 9"><rect x="0.5" y="0.5" width="6" height="6" fill="#eef2f8" stroke="#555" stroke-width="0.8"/><rect x="2.5" y="2.5" width="6" height="6" fill="#fff" stroke="#555" stroke-width="0.8"/></svg>
<svg class="a" style="left:606.5px;top:242.3px" width="9" height="8" viewBox="0 0 9 8"><path d="M1.5 1 H7.5 M1.5 6 L4.5 2.5 L7.5 6" stroke="#a9a9a9" stroke-width="1.1" fill="none"/></svg>
<svg class="a" style="left:606.5px;top:251.8px" width="9" height="8" viewBox="0 0 9 8"><path d="M4.5 1.5 V6.5 M2 4 H7" stroke="#a9a9a9" stroke-width="1.1"/></svg>
<svg class="a" style="left:606.5px;top:260.5px" width="9" height="8" viewBox="0 0 9 8"><path d="M1.5 6 L4.5 2 L7.5 6 Z" fill="#a9a9a9"/></svg>
<svg class="a" style="left:606.5px;top:480px" width="9" height="8" viewBox="0 0 9 8"><path d="M1.5 2 L4.5 6 L7.5 2 Z" fill="#a9a9a9"/></svg>
<svg class="a" style="left:606.5px;top:489px" width="9" height="8" viewBox="0 0 9 8"><path d="M4.5 1.5 V6.5 M2 4 H7" stroke="#a9a9a9" stroke-width="1.1"/></svg>
<svg class="a" style="left:606.5px;top:498px" width="9" height="8" viewBox="0 0 9 8"><path d="M1.5 2 L4.5 5.5 L7.5 2 M1.5 7 H7.5" stroke="#a9a9a9" stroke-width="1.1" fill="none"/></svg>
<svg class="a" style="left:606.5px;top:351px" width="9" height="8" viewBox="0 0 9 8"><path d="M2 1 Q0.5 4 2 7 M7 1 Q8.5 4 7 7 M4.5 1 V7" stroke="#a9a9a9" stroke-width="0.9" fill="none"/></svg>
<div class="a" style="left:607px;top:361px;width:7px;height:0.6px;background:#c8c8c8;"></div>
<svg class="a" style="left:606.5px;top:363.8px" width="9" height="8" viewBox="0 0 9 8"><circle cx="4" cy="3.5" r="2.5" fill="none" stroke="#a9a9a9" stroke-width="0.9"/><path d="M5.8 5.3 L8 7.5" stroke="#a9a9a9" stroke-width="1.2"/></svg>
<div class="a" style="left:607px;top:374.5px;width:7px;height:0.6px;background:#c8c8c8;"></div>
<svg class="a" style="left:606.5px;top:377.3px" width="9" height="8" viewBox="0 0 9 8"><path d="M1.5 7 V3 M3.5 7 V1.5 M5.5 7 V4 M7.5 7 V2.5" stroke="#a9a9a9" stroke-width="0.9"/></svg>
<div class="a" style="left:607px;top:388px;width:7px;height:0.6px;background:#c8c8c8;"></div>
<svg class="a" style="left:606.5px;top:391.2px" width="9" height="8" viewBox="0 0 9 8"><path d="M0.8 1 H7.5 L5 4 V7 L3.5 6 V4 Z" fill="none" stroke="#a9a9a9" stroke-width="0.9"/></svg>
<div class="a" style="left:315.2px;top:275px;width:142.5px;height:135.3px;background:#7f9dd6;border-radius:3px"></div>
<div class="a" style="left:315.2px;top:275px;width:142.5px;height:14.5px;background:#88a6dd;border-radius:3px 3px 0 0"></div>
<div class="t" style="top:277.0px;font-size:8.2px;font-weight:bold;color:#fff;line-height:10px;-webkit-text-stroke:0;left:321px;transform:scaleX(0.9285);transform-origin:left center;">BüroWARE Abfrage</div>
<div class="a" style="left:317.8px;top:290.5px;width:137.4px;height:117.3px;background:#c9dbf8;border:1px solid #a9c0ea"></div>
<svg class="a" style="left:325px;top:299px" width="19" height="16" viewBox="0 0 19 16"><path d="M9.5 0.8 L18.3 15.2 H0.7 Z" fill="#f4c93a" stroke="#c99a20" stroke-width="0.9" stroke-linejoin="round"/><rect x="8.5" y="4.5" width="2" height="6.5" fill="#222"/><rect x="8.5" y="12" width="2" height="2" fill="#222"/></svg>
<div class="t" style="top:297.6px;font-size:7.5px;font-weight:normal;color:#1f2433;line-height:10px;left:354px;transform:scaleX(0.8507);transform-origin:left center;">Disponierte Zahlung</div>
<div class="t" style="top:312.9px;font-size:7.5px;font-weight:normal;color:#1f2433;line-height:10px;left:354px;transform:scaleX(0.8634);transform-origin:left center;">Transaktion 5</div>
<div class="t" style="top:328.7px;font-size:7.5px;font-weight:normal;color:#1f2433;line-height:10px;left:354px;transform:scaleX(0.8518);transform-origin:left center;">Gruppe 18</div>
<div class="t" style="top:344.3px;font-size:7.5px;font-weight:normal;color:#1f2433;line-height:10px;left:354px;transform:scaleX(0.8834);transform-origin:left center;">Zahlbetrag 5199,16 €</div>
<div class="t" style="top:360.1px;font-size:7.5px;font-weight:normal;color:#1f2433;line-height:10px;left:354px;transform:scaleX(0.8692);transform-origin:left center;">Buchungsbetrag 5199,16 €</div>
<div class="a" style="left:353.4px;top:382.1px;width:29.6px;height:13.3px;background:linear-gradient(#f2f6fc,#d6e2f3);border:1px solid #6a80b0;border-radius:2px;box-shadow:inset 0 0 0 1px #b9c9e8"></div>
<div class="a" style="left:389.4px;top:382.1px;width:30.0px;height:13.3px;background:linear-gradient(#f2f6fc,#d6e2f3);border:1px solid #95a6c6;border-radius:2px"></div>
<div class="t" style="top:383.8px;font-size:7.5px;font-weight:normal;color:#1f2433;line-height:10px;left:365.5px;transform:scaleX(0.6943);transform-origin:left center;"><u>J</u>a</div>
<div class="t" style="top:383.8px;font-size:7.5px;font-weight:normal;color:#1f2433;line-height:10px;left:396.8px;transform:scaleX(0.9393);transform-origin:left center;"><u>N</u>ein</div>
</body></html>
